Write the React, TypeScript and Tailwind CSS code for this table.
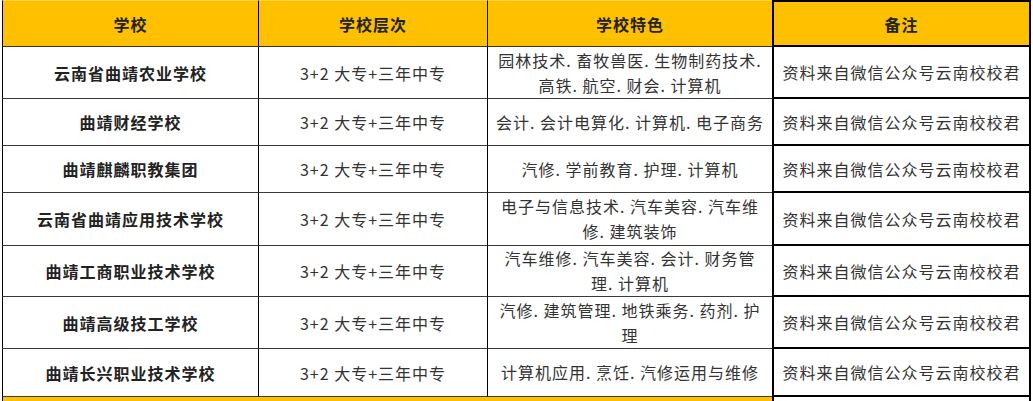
const rows = [
  {
    name: "云南省曲靖农业学校",
    level: "3+2 大专+三年中专",
    feature: ["园林技术. 畜牧兽医. 生物制药技术.", "高铁. 航空. 财会. 计算机"],
    h: "h-[52px]",
  },
  {
    name: "曲靖财经学校",
    level: "3+2 大专+三年中专",
    feature: ["会计. 会计电算化. 计算机. 电子商务"],
    h: "h-[47px]",
  },
  {
    name: "曲靖麒麟职教集团",
    level: "3+2 大专+三年中专",
    feature: ["汽修. 学前教育. 护理. 计算机"],
    h: "h-[47px]",
  },
  {
    name: "云南省曲靖应用技术学校",
    level: "3+2 大专+三年中专",
    feature: ["电子与信息技术. 汽车美容. 汽车维", "修. 建筑装饰"],
    h: "h-[53px]",
  },
  {
    name: "曲靖工商职业技术学校",
    level: "3+2 大专+三年中专",
    feature: ["汽车维修. 汽车美容. 会计. 财务管", "理. 计算机"],
    h: "h-[51px]",
  },
  {
    name: "曲靖高级技工学校",
    level: "3+2 大专+三年中专",
    feature: ["汽修. 建筑管理. 地铁乘务. 药剂. 护", "理"],
    h: "h-[52px]",
  },
  {
    name: "曲靖长兴职业技术学校",
    level: "3+2 大专+三年中专",
    feature: ["计算机应用. 烹饪. 汽修运用与维修"],
    h: "h-[48px]",
  },
];

const note = "资料来自微信公众号云南校校君";

export default function App() {
  return (
    <div
      className="w-[1033px] h-[401px] overflow-hidden bg-white pl-[2px] text-[16px] tracking-[1px]"
      style={{ fontFamily: '"Noto Sans CJK SC", "Noto Sans", sans-serif' }}
    >
      {/* header */}
      <div className="flex h-[47px] font-bold text-[#222]">
        <div className="w-[256px] flex items-center justify-center bg-[#ffc000] border-l border-b border-t border-l-black border-b-[#333] border-t-[#ffd54f]">
          学校
        </div>
        <div className="w-[229px] flex items-center justify-center bg-[#ffc000] border-l border-b border-t border-l-black border-b-[#333] border-t-[#ffd54f]">
          学校层次
        </div>
        <div className="w-[285px] flex items-center justify-center bg-[#ffc000] border-l border-b border-t border-l-black border-b-[#333] border-t-[#ffd54f]">
          学校特色
        </div>
        <div className="w-[259px] flex items-center justify-center bg-[#ffc000] border-2 border-black">
          备注
        </div>
      </div>

      {rows.map((r) => (
        <div key={r.name} className={`flex ${r.h}`}>
          <div className="w-[256px] flex items-center justify-center border-l border-b border-l-black border-b-[#3a3a3a] font-semibold text-[#222]">
            {r.name}
          </div>
          <div className="w-[229px] flex items-center justify-center border-l border-b border-l-black border-b-[#3a3a3a] text-[#333]">
            {r.level}
          </div>
          <div className="w-[285px] flex flex-col items-center justify-center border-l border-b border-l-black border-b-[#3a3a3a] text-[#333] leading-[25px] text-center">
            {r.feature.map((line) => (
              <span key={line} className="whitespace-nowrap">{line}</span>
            ))}
          </div>
          <div className="w-[259px] flex items-center justify-center border-x-2 border-b-2 border-black text-[#333]">
            {note}
          </div>
        </div>
      ))}

      {/* orange strip of the next row */}
      <div className="flex h-[4px]">
        <div className="w-[770px] bg-[#ffc000] border-l border-l-black" />
        <div className="w-[259px] border-x-2 border-black" />
      </div>
    </div>
  );
}
